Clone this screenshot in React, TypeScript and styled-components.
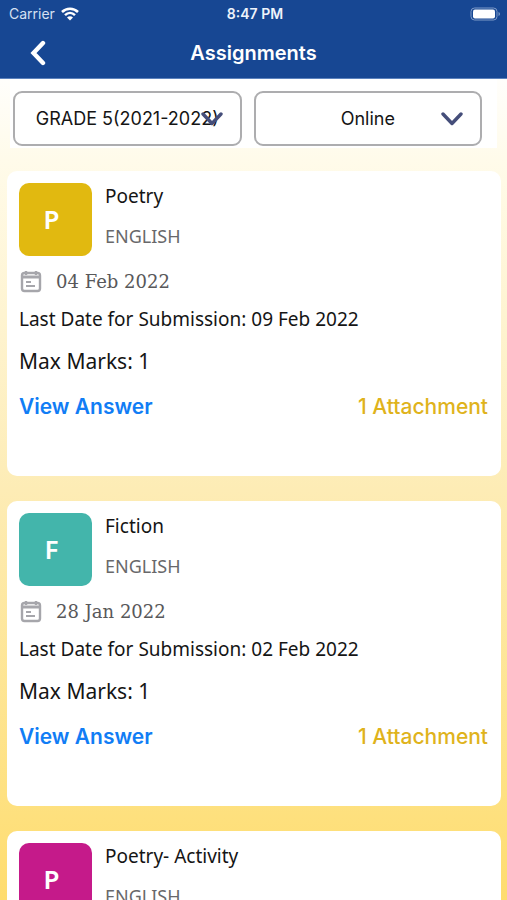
import React from "react";
import styled, { createGlobalStyle } from "styled-components";

const GlobalStyle = createGlobalStyle`
  *, *::before, *::after { box-sizing: border-box; }
  body { margin: 0; font-family: Inter, "Liberation Sans", sans-serif; color: #151515; }
  h1, h2, p { margin: 0; font-weight: 400; }
`;

const Screen = styled.div`
  height: 100vh;
  display: flex;
  flex-direction: column;
  overflow: hidden;
  background: linear-gradient(#fffefb 80px, #fffbea 160px, #fdecb5 490px, #fee07d 818px, #fedc6e 900px);
`;

const TopBar = styled.header`
  flex: none;
  background: #174793;
  color: #fff;
  border-bottom: 1px solid #5c82bd;
`;

const StatusBar = styled.div`
  height: 27px;
  padding: 0 6px 0 9px;
  display: grid;
  grid-template-columns: 1fr auto 1fr;
  align-items: center;
  font-size: 14px;
`;

const Carrier = styled.span`
  display: flex;
  align-items: center;
  gap: 6px;
  color: #d5e0f2;
`;

const Clock = styled.time`
  font-weight: 600;
  color: #eef3fb;
`;

const BatteryIcon = styled.svg`
  justify-self: end;
`;

const NavBar = styled.div`
  height: 51px;
  padding: 0 24px;
  display: grid;
  grid-template-columns: 28px 1fr 28px;
  align-items: center;
`;

const BackButton = styled.button`
  display: flex;
  justify-content: center;
  padding: 0;
  border: 0;
  background: none;
  color: #fff;
`;

const Title = styled.h1`
  text-align: center;
  font-size: 20px;
  line-height: 28px;
  && { font-weight: 600; }
`;

const Filters = styled.div`
  flex: none;
  margin: 0 10px;
  padding: 12px 15px 2px 3px;
  display: grid;
  grid-template-columns: 1fr 1fr;
  gap: 12px;
  background: #fff;
`;

const SelectBox = styled.div`
  position: relative;
`;

const Select = styled.select`
  appearance: none;
  display: block;
  width: 100%;
  height: 55px;
  padding: 0 20px;
  border: 2px solid #adadaf;
  border-radius: 9px;
  background: #fff;
  color: #151515;
  font: 400 18px/24px Inter, "Liberation Sans", sans-serif;
  text-align: center;
  text-align-last: center;
`;

const SelectArrow = styled.svg`
  position: absolute;
  right: 19px;
  top: 20px;
  pointer-events: none;
`;

const List = styled.main`
  flex: 1;
  min-height: 0;
  overflow-y: auto;
  scrollbar-width: none;
  padding: 23px 6px 24px 7px;
  display: flex;
  flex-direction: column;
  gap: 25px;
`;

const Card = styled.article`
  flex: none;
  padding: 12px 13px 55px 12px;
  border-radius: 10px;
  background: #fff;
  font-family: "Noto Sans", "Open Sans", sans-serif;
`;

const CardHead = styled.div`
  display: flex;
  gap: 13px;
`;

const Avatar = styled.div<{ $color: string }>`
  width: 73px;
  height: 73px;
  padding: 0 8px 2px 0;
  display: flex;
  align-items: center;
  justify-content: center;
  border-radius: 10px;
  background: ${(p) => p.$color};
  color: #fff;
  font: 600 26px/32px "Noto Sans", sans-serif;
`;

const Name = styled.h2`
  font-size: 19px;
  line-height: 26px;
`;

const Subject = styled.p`
  margin-top: 14px;
  font-size: 18px;
  line-height: 26px;
  color: #68686a;
`;

const DateRow = styled.div`
  margin-top: 13px;
  display: flex;
  align-items: center;
  gap: 12px;
  color: #58585a;
  font: 400 18px/26px "DejaVu Serif", serif;
`;

const Deadline = styled.p`
  margin-top: 10px;
  font-size: 19px;
  line-height: 28px;
`;

const Marks = styled.p`
  margin-top: 14px;
  font-size: 21px;
  line-height: 28px;
`;

const Actions = styled.div`
  margin-top: 18px;
  display: flex;
  justify-content: space-between;
  align-items: center;
`;

const Action = styled.a<{ $tone: "answer" | "file" }>`
  color: ${(p) => (p.$tone === "answer" ? "#117df5" : "#dfb31c")};
  font: ${(p) => (p.$tone === "answer" ? 600 : 500)} 21px/28px Inter, "Liberation Sans", sans-serif;
  text-decoration: none;
`;

const CalendarIcon = () => (
  <svg width="25" height="24" viewBox="0 0 25 24" fill="none" stroke="#a6a6ab" aria-hidden="true">
    <rect x="3" y="3" width="18" height="18" rx="2.5" strokeWidth="2.4" />
    <path d="M3 7h18" strokeWidth="3" />
    <path d="M7 1v4M17 1v4" strokeWidth="2.4" />
    <path d="M7 12h5M7 16h9" strokeWidth="2" />
  </svg>
);

const WifiIcon = () => (
  <svg width="18" height="14" viewBox="0 0 18 14" aria-label="Wi-Fi">
    <g fill="none" stroke="#fff" strokeWidth="2.5">
      <path d="M1 5C5.500.5 12.500.5 17 5" />
      <path d="M4 8.200c3-2.900 7-2.900 10 0" />
    </g>
    <path d="M9 13.5 6 10.500c1.800-1.600 4.200-1.600 6 0z" fill="#fff" />
  </svg>
);

const filters = [
  { label: "Grade", value: "GRADE 5(2021-2022)" },
  { label: "Mode", value: "Online" },
];

const assignments = [
  { name: "Poetry", color: "#e1b910", date: "04 Feb 2022", due: "09 Feb 2022" },
  { name: "Fiction", color: "#43b5ab", date: "28 Jan 2022", due: "02 Feb 2022" },
  { name: "Poetry- Activity", color: "#c51a8a", date: "28 Jan 2022", due: "02 Feb 2022" },
];

export default function App() {
  return (
    <Screen>
      <GlobalStyle />
      <TopBar>
        <StatusBar>
          <Carrier>
            Carrier
            <WifiIcon />
          </Carrier>
          <Clock>8:47 PM</Clock>
          <BatteryIcon width="31" height="14" viewBox="0 0 31 14" aria-label="Battery">
            <rect x="1" y="1" width="26" height="12" rx="3.5" fill="none" stroke="#7f9bc8" />
            <rect x="3" y="2.5" width="22" height="9" rx="2" fill="#fff" />
            <path d="M28.5 5v4c2-.8 2-3.200 0-4z" fill="#7f9bc8" />
          </BatteryIcon>
        </StatusBar>
        <NavBar>
          <BackButton type="button" aria-label="Back">
            <svg width="18" height="26" viewBox="0 0 18 26" fill="none" stroke="currentColor" strokeWidth="4.4" strokeLinecap="round">
              <path d="M14 3 4.500 13 14 23" />
            </svg>
          </BackButton>
          <Title>Assignments</Title>
        </NavBar>
      </TopBar>
      <Filters>
        {filters.map((f) => (
          <SelectBox key={f.label}>
            <Select aria-label={f.label} defaultValue={f.value}>
              <option>{f.value}</option>
            </Select>
            <SelectArrow width="22" height="15" viewBox="0 0 22 15" fill="none" stroke="#454e7a" strokeWidth="3.4" strokeLinecap="round" strokeLinejoin="round">
              <path d="m2 3 9 9.500L20 3" />
            </SelectArrow>
          </SelectBox>
        ))}
      </Filters>
      <List>
        {assignments.map((a) => (
          <Card key={a.name}>
            <CardHead>
              <Avatar $color={a.color}>{a.name[0]}</Avatar>
              <div>
                <Name>{a.name}</Name>
                <Subject>ENGLISH</Subject>
              </div>
            </CardHead>
            <DateRow>
              <CalendarIcon />
              <time>{a.date}</time>
            </DateRow>
            <Deadline>Last Date for Submission: {a.due}</Deadline>
            <Marks>Max Marks: 1</Marks>
            <Actions>
              <Action href="#answer" $tone="answer">View Answer</Action>
              <Action href="#attachment" $tone="file">1 Attachment</Action>
            </Actions>
          </Card>
        ))}
      </List>
    </Screen>
  );
}
